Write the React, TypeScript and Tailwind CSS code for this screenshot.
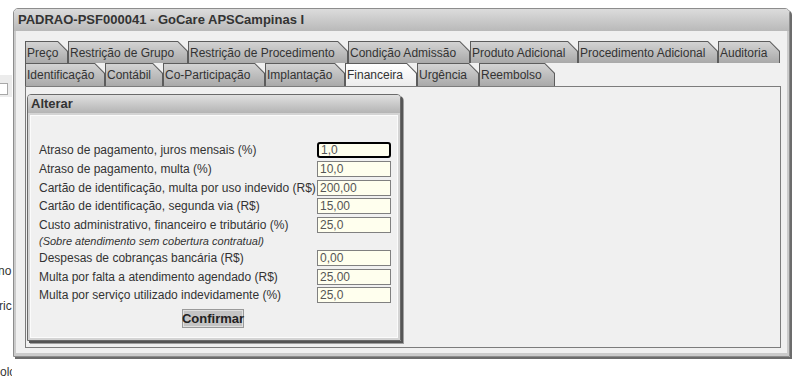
import React from "react";

const row1 = [
  { t: "Preço", w: 43 },
  { t: "Restrição de Grupo", w: 120 },
  { t: "Restrição de Procedimento", w: 160 },
  { t: "Condição Admissão", w: 122 },
  { t: "Produto Adicional", w: 108 },
  { t: "Procedimento Adicional", w: 140 },
  { t: "Auditoria", w: 62 },
];

const row2 = [
  { t: "Identificação", w: 80 },
  { t: "Contábil", w: 58 },
  { t: "Co-Participação", w: 102 },
  { t: "Implantação", w: 80 },
  { t: "Financeira", w: 72, sel: true },
  { t: "Urgência", w: 62 },
  { t: "Reembolso", w: 76 },
];

function Tab({ t, w, h, sel }: { t: string; w: number; h: number; sel?: boolean }) {
  return (
    <div
      className="shrink-0 bg-[#5c5c5c] px-px pt-px [clip-path:polygon(0_0,calc(100%_-_10px)_0,100%_10px,100%_100%,0_100%)]"
      style={{ width: w, height: h }}
    >
      <div
        className={
          "flex h-full items-center pl-[1px] text-[12px] leading-none text-[#333] whitespace-nowrap [clip-path:polygon(0_0,calc(100%_-_9.4px)_0,100%_9.4px,100%_100%,0_100%)] " +
          (sel
            ? "bg-gradient-to-b from-white to-[#ececec]"
            : "bg-gradient-to-b from-[#d3d3d3] to-[#a9a9a9]")
        }
      >
        {t}
      </div>
    </div>
  );
}

const fields = [
  { l: "Atraso de pagamento, juros mensais (%)", v: "1,0", focus: true },
  { l: "Atraso de pagamento, multa (%)", v: "10,0" },
  { l: "Cartão de identificação, multa por uso indevido (R$)", v: "200,00" },
  { l: "Cartão de identificação, segunda via (R$)", v: "15,00" },
  { l: "Custo administrativo, financeiro e tributário (%)", v: "25,0", note: true },
  { l: "Despesas de cobranças bancária (R$)", v: "0,00" },
  { l: "Multa por falta a atendimento agendado (R$)", v: "25,00" },
  { l: "Multa por serviço utilizado indevidamente (%)", v: "25,0" },
];

export default function App() {
  return (
    <div className="relative h-[377px] w-[811px] overflow-hidden bg-white font-['Liberation_Sans',Arial,sans-serif] text-[#333]">
      {/* background page fragments */}
      <div className="flex w-[12px] flex-col overflow-hidden text-[12px] leading-[14px] text-[#333]">
        <div className="mt-[75px] h-[22px] w-[12px] bg-[#ececec] pt-[8px]">
          <div className="h-[12px] w-[8px] border border-[#a8a8a8] border-l-0 bg-white" />
        </div>
        <div className="mt-[167px] -ml-[2px] whitespace-nowrap">no</div>
        <div className="mt-[21px] -ml-[1px] whitespace-nowrap">ric</div>
        <div className="mt-[52px] whitespace-nowrap">olo</div>
      </div>

      {/* window */}
      <div className="absolute left-[13px] top-[8px] flex h-[349px] w-[777px] flex-col rounded-t-[5px] border border-[#8d8d8d] shadow-[2px_2px_0_#6c6c6c]">
        <div className="flex h-[22px] shrink-0 items-center rounded-t-[4px] bg-gradient-to-b from-[#dcdcdc] to-[#b9b9b9] pl-[4px] text-[13px] font-bold text-[#333]">
          PADRAO-PSF000041 - GoCare APSCampinas I
        </div>
        <div className="flex flex-1 flex-col border-x-2 border-b-[3px] border-[#cbcbcb] bg-[#f0f0f0] pb-[5px] pl-[9px] pr-[6px] pt-[10px]">
          <div className="flex">
            {row1.map((x) => (
              <Tab key={x.t} t={x.t} w={x.w} h={22} />
            ))}
          </div>
          <div className="flex">
            {row2.map((x) => (
              <Tab key={x.t} t={x.t} w={x.w} h={23} sel={x.sel} />
            ))}
          </div>
          <div className="flex-1 border border-[#7c7c7c] bg-[#f0f0f0] pl-px pt-[7px]">
            {/* Alterar panel */}
            <div className="flex h-[247px] w-[374px] flex-col rounded-t-[4px] border border-[#6a6a6a] shadow-[2px_2px_0_#555,3px_3px_0_#a0a0a0]">
              <div className="flex h-[18px] shrink-0 items-center rounded-t-[3px] bg-gradient-to-b from-[#e0e0e0] to-[#b4b4b4] pl-[3px] text-[13px] font-bold text-[#333]">
                Alterar
              </div>
              <div className="flex flex-1 flex-col border-[2px] border-[#d4d4d4] bg-[#f0f0f0]">
                <div className="flex flex-1 flex-col border border-[#fbfbfb] pl-[8px] pt-[25px]">
                  {fields.map((f) => (
                    <React.Fragment key={f.l}>
                      <div className="flex h-[18.7px] items-center">
                        <div className="w-[278px] whitespace-nowrap text-[12px] leading-none text-[#333]">
                          {f.l}
                        </div>
                        <div
                          className={
                            "flex h-[16px] w-[74px] items-center bg-[#ffffee] pl-[2px] text-[12px] leading-none text-[#555] " +
                            (f.focus
                              ? "rounded-[3px] border-2 border-black pl-[1px]"
                              : "border border-[#808080]")
                          }
                        >
                          {f.v}
                        </div>
                      </div>
                      {f.note && (
                        <div className="flex h-[14.3px] items-center whitespace-nowrap text-[11px] italic leading-none text-[#333]">
                          (Sobre atendimento sem cobertura contratual)
                        </div>
                      )}
                    </React.Fragment>
                  ))}
                  <div className="mt-[4px] flex justify-center pr-[10px]">
                    <div className="flex h-[19px] w-[62px] items-center justify-center border border-[#9a9a9a] bg-[#c4c4c4] text-[13px] font-bold text-[#222] shadow-[inset_0_0_0_1px_#e0e0e0]">
                      Confirmar
                    </div>
                  </div>
                </div>
              </div>
            </div>
          </div>
        </div>
      </div>
    </div>
  );
}
